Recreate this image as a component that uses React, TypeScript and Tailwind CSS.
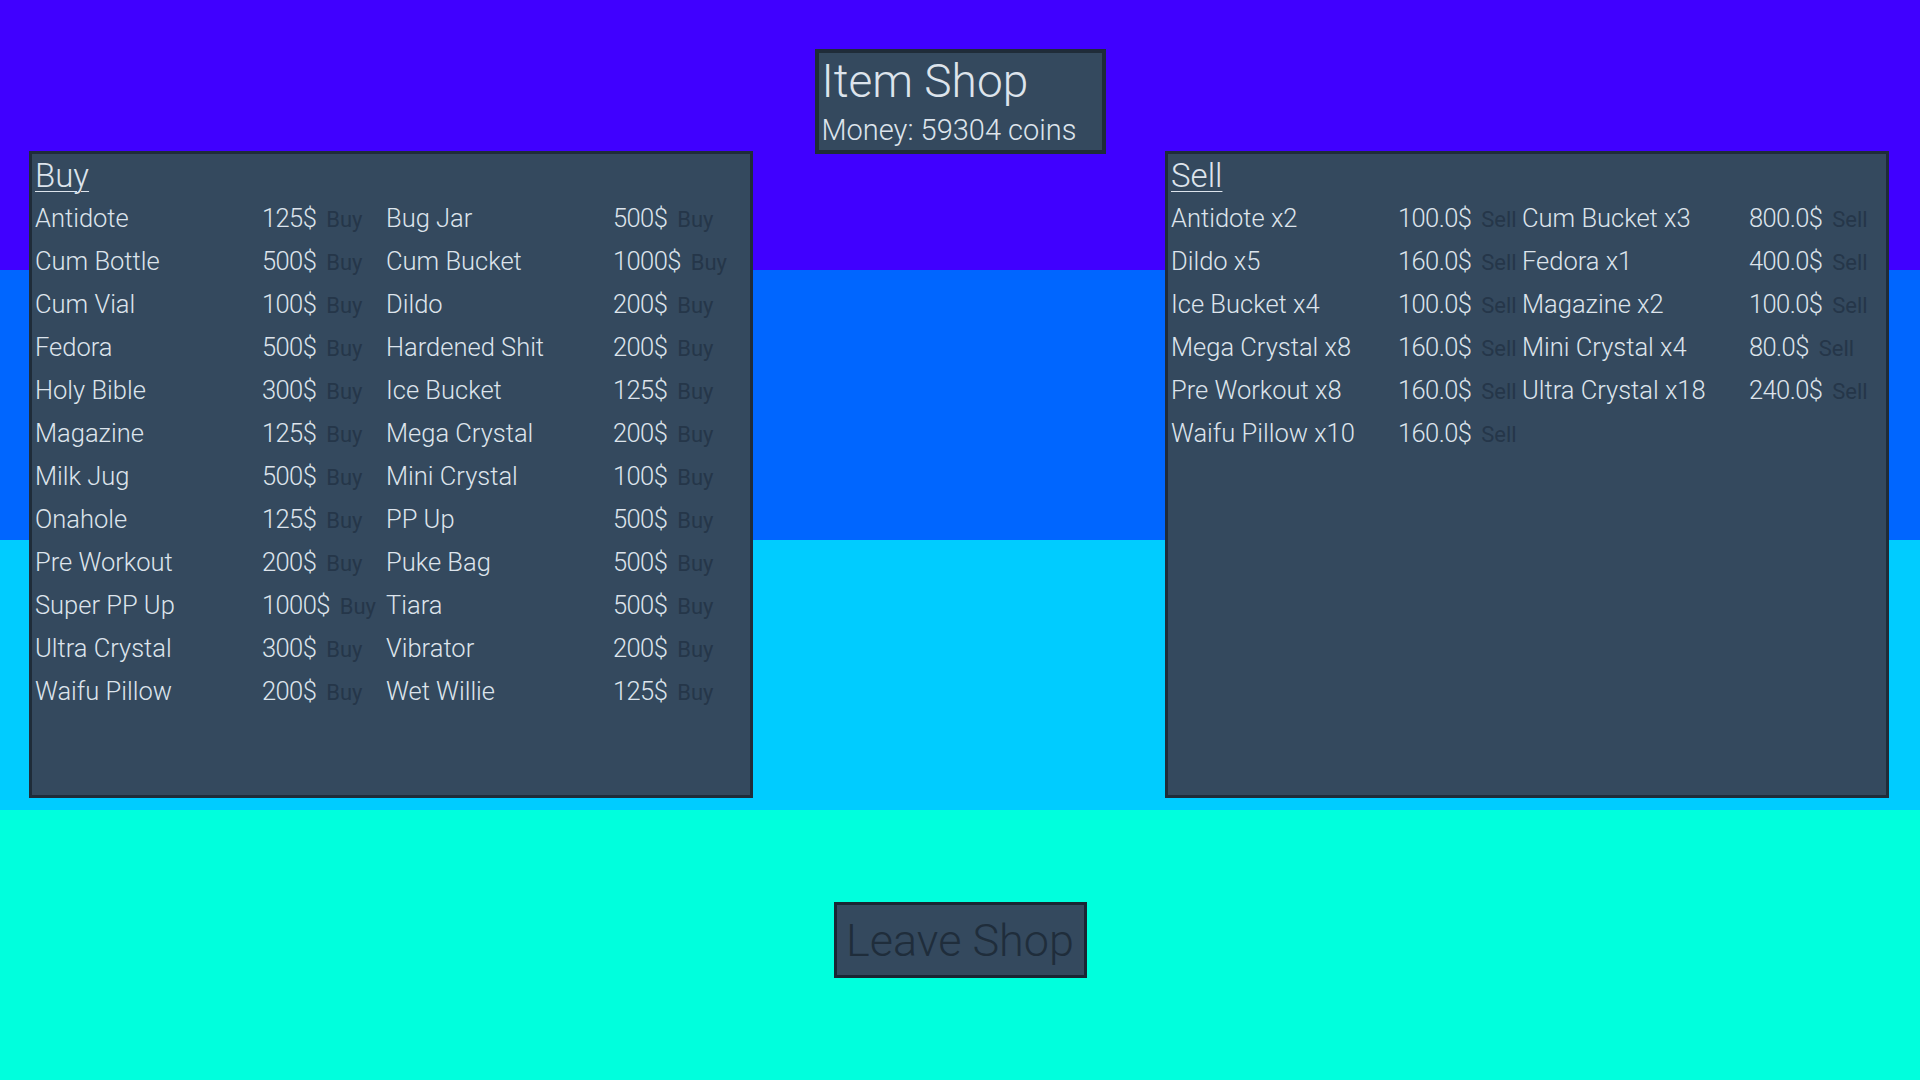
import React from 'react'

type Entry = { name: string; price: string }

const buyItems: Entry[] = [
  { name: 'Antidote', price: '125$' },
  { name: 'Bug Jar', price: '500$' },
  { name: 'Cum Bottle', price: '500$' },
  { name: 'Cum Bucket', price: '1000$' },
  { name: 'Cum Vial', price: '100$' },
  { name: 'Dildo', price: '200$' },
  { name: 'Fedora', price: '500$' },
  { name: 'Hardened Shit', price: '200$' },
  { name: 'Holy Bible', price: '300$' },
  { name: 'Ice Bucket', price: '125$' },
  { name: 'Magazine', price: '125$' },
  { name: 'Mega Crystal', price: '200$' },
  { name: 'Milk Jug', price: '500$' },
  { name: 'Mini Crystal', price: '100$' },
  { name: 'Onahole', price: '125$' },
  { name: 'PP Up', price: '500$' },
  { name: 'Pre Workout', price: '200$' },
  { name: 'Puke Bag', price: '500$' },
  { name: 'Super PP Up', price: '1000$' },
  { name: 'Tiara', price: '500$' },
  { name: 'Ultra Crystal', price: '300$' },
  { name: 'Vibrator', price: '200$' },
  { name: 'Waifu Pillow', price: '200$' },
  { name: 'Wet Willie', price: '125$' },
]

const sellItems: Entry[] = [
  { name: 'Antidote x2', price: '100.0$' },
  { name: 'Cum Bucket x3', price: '800.0$' },
  { name: 'Dildo x5', price: '160.0$' },
  { name: 'Fedora x1', price: '400.0$' },
  { name: 'Ice Bucket x4', price: '100.0$' },
  { name: 'Magazine x2', price: '100.0$' },
  { name: 'Mega Crystal x8', price: '160.0$' },
  { name: 'Mini Crystal x4', price: '80.0$' },
  { name: 'Pre Workout x8', price: '160.0$' },
  { name: 'Ultra Crystal x18', price: '240.0$' },
  { name: 'Waifu Pillow x10', price: '160.0$' },
]

function ItemRow({ item, action }: { item: Entry; action: string }) {
  return (
    <div className="flex h-[43px] w-[351px] items-center whitespace-nowrap leading-[43px]">
      <span className="w-[227px] shrink-0">{item.name}</span>
      <span className="tracking-[-0.6px]">{item.price}</span>
      <span className="relative z-10 ml-[10px] mt-[2px] text-[22px] font-normal text-[#253649]">{action}</span>
    </div>
  )
}

function ShopPanel({ title, items, action }: { title: string; items: Entry[]; action: string }) {
  return (
    <div className="box-border h-[647px] w-[724px] border-[3px] border-[#1f2c39] bg-[#34495e] pl-[3px] pt-[1px]">
      <div className="h-[41px] text-[33px] leading-[41px]">
        <span className="underline decoration-1 underline-offset-[4px]">{title}</span>
      </div>
      <div className="mt-[1px] grid grid-cols-[351px_351px] text-[25.5px]">
        {items.map((item) => (
          <ItemRow key={item.name} item={item} action={action} />
        ))}
      </div>
    </div>
  )
}

export default function App() {
  return (
    <div
      className="flex h-[1080px] w-[1920px] flex-col items-center overflow-hidden bg-[linear-gradient(to_bottom,#4000ff_0_270px,#0066ff_270px_540px,#00ccff_540px_810px,#00ffdd_810px_1080px)] font-['Roboto','Liberation_Sans',sans-serif] font-light text-[#dde4ec]"
    >
      {/* header */}
      <div className="mt-[49px] box-border h-[105px] w-[291px] border-4 border-[#1f2c39] bg-[#34495e] pl-[3px] pt-[1px]">
        <div className="h-[54px] text-[46px] leading-[54px]">Item Shop</div>
        <div className="mt-[8px] text-[29px] leading-[29px]">Money: 59304 coins</div>
      </div>

      <div className="-mt-[3px] flex w-full justify-between pl-[29px] pr-[31px]">
        <ShopPanel title="Buy" items={buyItems} action="Buy" />
        <ShopPanel title="Sell" items={sellItems} action="Sell" />
      </div>

      <button className="mt-[104px] box-border flex h-[76px] w-[253px] items-center justify-center border-[3px] border-[#1a2633] bg-[#34495e] text-[45px] leading-none text-[#1f2d3b]">
        Leave Shop
      </button>
    </div>
  )
}
